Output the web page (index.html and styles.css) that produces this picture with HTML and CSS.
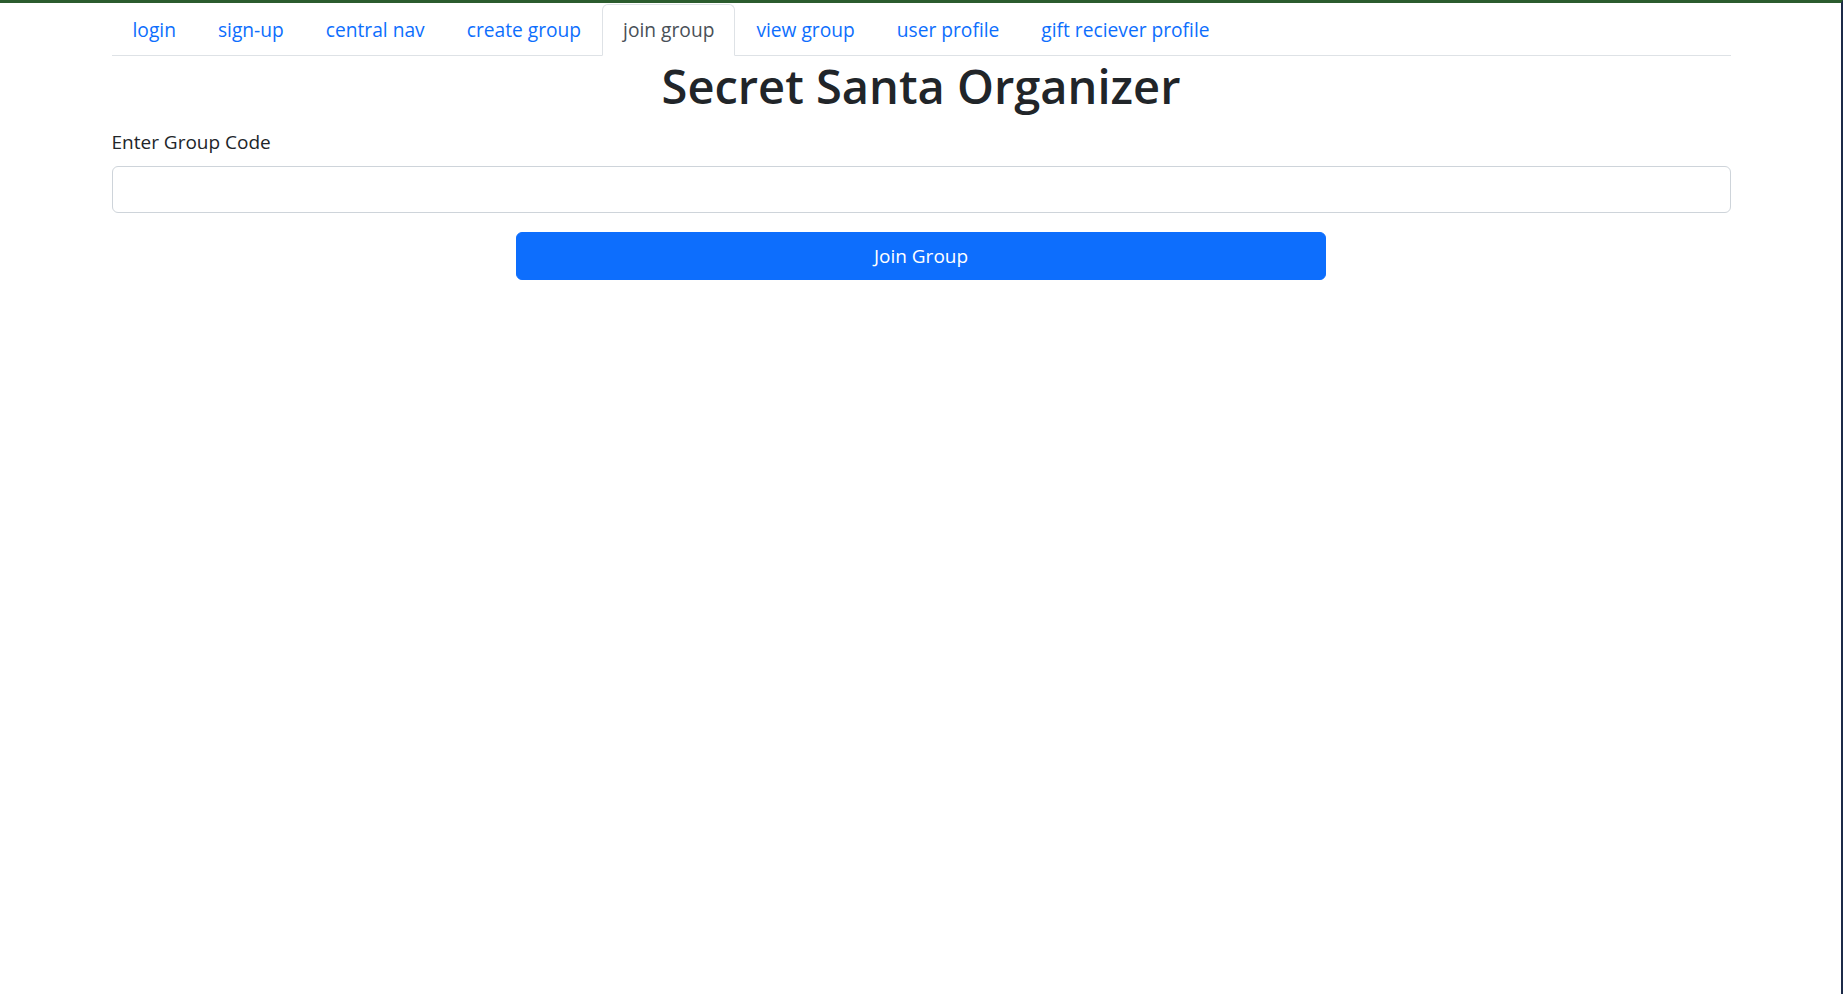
FILE: index.html
```html
<!DOCTYPE html>
<html lang="en">
<head>
<meta charset="utf-8">
<title>Secret Santa Organizer - Join Group</title>
<link rel="stylesheet" href="styles.css">
</head>
<body>
<div class="container">
  <ul class="nav-tabs">
    <li><a class="nav-link" href="#">login</a></li>
    <li><a class="nav-link" href="#">sign-up</a></li>
    <li><a class="nav-link" href="#">central nav</a></li>
    <li><a class="nav-link" href="#">create group</a></li>
    <li><a class="nav-link active" href="#">join group</a></li>
    <li><a class="nav-link" href="#">view group</a></li>
    <li><a class="nav-link" href="#">user profile</a></li>
    <li><a class="nav-link" href="#">gift reciever profile</a></li>
  </ul>
  <h1 class="title">Secret Santa Organizer</h1>
  <form class="join-form">
    <label class="form-label" for="code">Enter Group Code</label>
    <input class="form-control" id="code" type="text">
    <button class="btn-primary" type="button">Join Group</button>
  </form>
</div>
</body>
</html>
```
FILE: styles.css
```css
* { box-sizing: border-box; }
html, body { height: 100%; }
body {
  margin: 0;
  border-top: 3px solid #2b5c2e;
  border-right: 2px solid #1c2a48;
  background: #fff;
  font-family: "Open Sans", "Liberation Sans", sans-serif;
  font-size: 19px;
  color: #212529;
}
.container {
  width: 1620px;
  margin: 0 auto;
  padding-left: 1px;
}
.nav-tabs {
  display: flex;
  list-style: none;
  margin: 1px 0 0;
  padding: 0;
  border-bottom: 1px solid #dee2e6;
}
.nav-link {
  display: block;
  margin-bottom: -1px;
  padding: 10px 20px;
  font-size: 19.2px;
  line-height: 30px;
  color: #0d6efd;
  text-decoration: none;
  border: 1px solid transparent;
  border-radius: 6px 6px 0 0;
}
.nav-link.active {
  color: #495057;
  background: #fff;
  border-color: #dee2e6 #dee2e6 #fff;
}
.title {
  margin: 0 0 11px;
  text-align: center;
  font-size: 47px;
  font-weight: 600;
  line-height: 60px;
}
.join-form {
  display: flex;
  flex-direction: column;
  align-items: stretch;
}
.form-label {
  line-height: 30px;
  margin-bottom: 9px;
}
.form-control {
  height: 47px;
  padding: 8px 15px;
  font: inherit;
  color: #212529;
  border: 1px solid #ced4da;
  border-radius: 6px;
  outline: none;
}
.btn-primary {
  align-self: center;
  width: 810px;
  height: 48px;
  margin-top: 19px;
  font: inherit;
  color: #fff;
  background: #0d6efd;
  border: 1px solid #0d6efd;
  border-radius: 6px;
}
```
